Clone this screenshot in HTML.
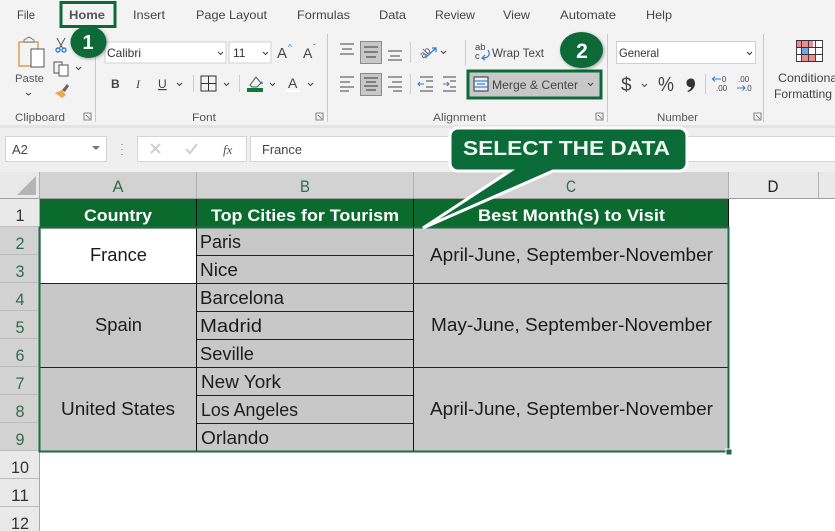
<!DOCTYPE html>
<html><head><meta charset="utf-8"><style>
html,body{margin:0;padding:0;background:#fff}
svg{display:block}
text{font-family:"Liberation Sans",sans-serif}
</style></head><body>
<svg width="835" height="531" viewBox="0 0 835 531" xmlns="http://www.w3.org/2000/svg">
<defs><style>
.tab{font-size:12px;fill:#444}
.lbl{font-size:11px;fill:#555}
.hd{font-size:17px;fill:#fff;font-weight:bold}
.cell{font-size:18px;fill:#1c1c1c}
.rn{font-size:17px;fill:#333;text-anchor:middle}
.rs{font-size:17px;fill:#2f6b50;text-anchor:middle}
.ln{stroke:#444;stroke-width:1;fill:none}
.sep{stroke:#cfcfcf;stroke-width:1}
</style>
<filter id="sh" x="-30%" y="-30%" width="160%" height="160%"><feDropShadow dx="1" dy="1" stdDeviation="1.500" flood-color="#000" flood-opacity=".35"/></filter>
</defs>
<rect width="835" height="531" fill="#fff"/>
<!-- ribbon -->
<rect width="835" height="125" fill="#f3f3f3"/>
<rect y="125" width="835" height="3" fill="#e4e4e4"/>
<rect y="128" width="835" height="44" fill="#efefef"/>
<!-- tabs -->
<text class="tab" x="17" y="19" textLength="18" lengthAdjust="spacingAndGlyphs">File</text>
<text class="tab" x="69" y="19" textLength="36" lengthAdjust="spacingAndGlyphs" style="font-weight:bold;fill:#555">Home</text>
<text class="tab" x="133" y="19" textLength="32" lengthAdjust="spacingAndGlyphs">Insert</text>
<text class="tab" x="196" y="19" textLength="71" lengthAdjust="spacingAndGlyphs">Page Layout</text>
<text class="tab" x="297" y="19" textLength="53" lengthAdjust="spacingAndGlyphs">Formulas</text>
<text class="tab" x="379" y="19" textLength="27" lengthAdjust="spacingAndGlyphs">Data</text>
<text class="tab" x="435" y="19" textLength="40" lengthAdjust="spacingAndGlyphs">Review</text>
<text class="tab" x="503" y="19" textLength="27" lengthAdjust="spacingAndGlyphs">View</text>
<text class="tab" x="560" y="19" textLength="56" lengthAdjust="spacingAndGlyphs">Automate</text>
<text class="tab" x="646" y="19" textLength="26" lengthAdjust="spacingAndGlyphs">Help</text>
<rect x="61" y="2.500" width="54" height="24" fill="none" stroke="#0b6b38" stroke-width="3"/>
<!-- clipboard -->
<rect x="19" y="42" width="19" height="24" fill="none" stroke="#d9a24f" stroke-width="1.500"/>
<path d="M24 42v-2l5-3 5 3v2z" fill="#f3f3f3" stroke="#777"/>
<rect x="31" y="49" width="13" height="18" fill="#fff" stroke="#555"/>
<text class="lbl" x="15" y="82" textLength="29" lengthAdjust="spacingAndGlyphs">Paste</text>
<path d="M26 93l2.500 2 2.500-2" class="ln"/>
<path d="M57 38l6 11M65 38l-6 11" stroke="#555" fill="none"/>
<circle cx="58" cy="50" r="2" fill="none" stroke="#2b7cd3" stroke-width="1.400"/><circle cx="64" cy="50" r="2" fill="none" stroke="#2b7cd3" stroke-width="1.400"/>
<rect x="54" y="62" width="8" height="11" fill="#f3f3f3" stroke="#555"/><rect x="59" y="65" width="9" height="11" fill="#fff" stroke="#555"/>
<path d="M76 67l2.500 2.500 2.500-2.500" class="ln"/>
<path d="M55 93l7-3 4 5-4 3z" fill="#e9a94c"/><path d="M62 90l5-6 2 2-4 6z" fill="#666"/>
<text class="lbl" x="15" y="121" textLength="50" lengthAdjust="spacingAndGlyphs">Clipboard</text>
<path d="M84 113h7v7h-7zM86 115l4 4" fill="none" stroke="#666" stroke-width=".8"/>
<line x1="95.500" y1="34" x2="95.500" y2="122" stroke="#c8c8c8"/>
<!-- font -->
<rect x="105" y="42" width="121" height="21" fill="#fff" stroke="#d0d0d0"/>
<text x="107" y="57" style="font-size:12px;fill:#333" textLength="34" lengthAdjust="spacingAndGlyphs">Calibri</text>
<path d="M218 52l2.500 2.500 2.500-2.500" class="ln"/>
<rect x="229" y="42" width="42" height="21" fill="#fff" stroke="#d0d0d0"/>
<text x="233" y="57" style="font-size:12px;fill:#333">11</text>
<path d="M263 52l2.500 2.500 2.500-2.500" class="ln"/>
<text x="277" y="58" style="font-size:15px;fill:#444">A</text><text x="288" y="50" style="font-size:8px;fill:#1f7ad0">^</text>
<text x="303" y="58" style="font-size:14px;fill:#444">A</text><text x="313" y="50" style="font-size:8px;fill:#1f7ad0">ˇ</text>
<text x="111" y="88" style="font-size:12px;font-weight:bold;fill:#444">B</text>
<text x="136" y="88" style="font-size:12px;font-style:italic;fill:#444;font-family:'Liberation Serif',serif">I</text>
<text x="158" y="88" style="font-size:12px;fill:#444;text-decoration:underline">U</text>
<path d="M177 83l2.500 2.500 2.500-2.500" class="ln"/>
<line x1="193.500" y1="75" x2="193.500" y2="92" class="sep"/>
<path d="M201 76h15v15h-15zM208.500 76v15M201 83.500h15" fill="none" stroke="#333"/>
<path d="M224 83l2.500 2.500 2.500-2.500" class="ln"/>
<line x1="239.500" y1="75" x2="239.500" y2="92" class="sep"/>
<path d="M250 85l6-8 5 6-4 4h-5z" fill="#f3f3f3" stroke="#555"/><path d="M260 84l2-3 1 3z" fill="#1f7ad0"/>
<rect x="247" y="88" width="16" height="4" fill="#0b7a3b"/>
<path d="M270 83l2.500 2.500 2.500-2.500" class="ln"/>
<text x="288" y="88" style="font-size:14px;fill:#444">A</text><rect x="286" y="90" width="14" height="2" fill="#fff"/>
<path d="M308 83l2.500 2.500 2.500-2.500" class="ln"/>
<text class="lbl" x="192" y="121" textLength="24" lengthAdjust="spacingAndGlyphs">Font</text>
<path d="M316 113h7v7h-7zM318 115l4 4" fill="none" stroke="#666" stroke-width=".8"/>
<line x1="327.500" y1="34" x2="327.500" y2="122" stroke="#c8c8c8"/>
<!-- alignment -->
<path d="M340 44h14M342 49h10M340 54h14" class="ln"/>
<rect x="360.500" y="41.500" width="21" height="22" fill="#c8c8c8" stroke="#8a8a8a"/>
<path d="M364 47h14M364 52h14M366 57h10" stroke="#333" fill="none"/>
<path d="M388 51h14M390 56h10M388 60h14" class="ln"/>
<line x1="410.500" y1="42" x2="410.500" y2="63" class="sep"/>
<text x="418" y="56" style="font-size:10px;fill:#555" transform="rotate(-45 424 51)">ab</text>
<path d="M425 58l11-10m-4 0h4v4" stroke="#2b7cd3" fill="none" stroke-width="1.300"/>
<path d="M441 51l2.500 2.500 2.500-2.500" class="ln"/>
<line x1="465.500" y1="40" x2="465.500" y2="66" class="sep"/>
<text x="475" y="50" style="font-size:9.500px;fill:#444">ab</text><text x="475" y="59" style="font-size:9.500px;fill:#444">c</text>
<path d="M488 50c3 5 0 8-5 8m2-3l-3 3 3 2" stroke="#2b7cd3" fill="none" stroke-width="1.200"/>
<text x="492" y="57" style="font-size:12px;fill:#444" textLength="52" lengthAdjust="spacingAndGlyphs">Wrap Text</text>
<path d="M340 77h14M340 82h10M340 87h14M340 91h9" class="ln" stroke-width=".9"/>
<rect x="360.500" y="73.500" width="21" height="22" fill="#c8c8c8" stroke="#8a8a8a"/>
<path d="M364 78h14M366 82h10M364 86h14M366 90h10" stroke="#333" fill="none"/>
<path d="M388 77h14M392 82h10M388 87h14M393 91h9" class="ln"/>
<line x1="410.500" y1="74" x2="410.500" y2="94" class="sep"/>
<path d="M424 84h-6m2-2l-2 2 2 2" stroke="#2b7cd3" fill="none"/><path d="M420 77h13M426 81h7M426 87h7M420 91h13" class="ln"/>
<path d="M443 84h6m-2-2l2 2-2 2" stroke="#2b7cd3" fill="none"/><path d="M443 77h13M450 81h6M450 87h6M443 91h13" class="ln"/>
<!-- merge -->
<rect x="468" y="71" width="133" height="27" fill="#c8c8c8" stroke="#0b6b38" stroke-width="3"/>
<rect x="474" y="77" width="14" height="14" fill="#e8eef5" stroke="#333"/><path d="M474 81h14M474 87h14M477 84h8" stroke="#1f6fc0" fill="none"/>
<text x="492" y="89" style="font-size:12px;fill:#444" textLength="86" lengthAdjust="spacingAndGlyphs">Merge &amp; Center</text>
<path d="M588 83l2.500 2.500 2.500-2.500" class="ln"/>
<text class="lbl" x="433" y="121" textLength="53" lengthAdjust="spacingAndGlyphs">Alignment</text>
<line x1="607.500" y1="34" x2="607.500" y2="122" stroke="#c8c8c8"/>
<path d="M596 113h7v7h-7zM598 115l4 4" fill="none" stroke="#666" stroke-width=".8"/>
<!-- number -->
<rect x="616.500" y="41.500" width="139" height="22" fill="#fff" stroke="#d0d0d0"/>
<text x="619" y="57" style="font-size:12px;fill:#333" textLength="40" lengthAdjust="spacingAndGlyphs">General</text>
<path d="M747 52l2.500 2.500 2.500-2.500" stroke="#333" fill="none"/>
<text x="621" y="91" style="font-size:19px;fill:#444">$</text>
<path d="M642 84l2.500 2.500 2.500-2.500" class="ln"/>
<text x="658" y="91" style="font-size:20px;fill:#444" textLength="16" lengthAdjust="spacingAndGlyphs">%</text>
<path d="M691 78.500c3 0 4 2.500 4 5 0 4-3 7.500-7 8.500l-.5-1c2-1 3.500-2.500 3.800-4-3 .5-4.800-1.500-4.800-4.300 0-2.400 2-4.200 4.500-4.200z" fill="#333"/>
<line x1="705.500" y1="74" x2="705.500" y2="94" class="sep"/>
<text x="724" y="82" style="font-size:8px;fill:#444;text-anchor:middle">0</text><text x="716" y="91" style="font-size:8px;fill:#444">.00</text>
<path d="M713 79h8m-6-2.500l-2.500 2.500 2.500 2.500" stroke="#2b7cd3" fill="none"/>
<text x="738" y="82" style="font-size:8px;fill:#444">.00</text><text x="745" y="91" style="font-size:8px;fill:#444">.0</text>
<path d="M737 88h8m-2.500-2.500l2.500 2.500-2.500 2.500" stroke="#2b7cd3" fill="none"/>
<text class="lbl" x="657" y="121" textLength="41" lengthAdjust="spacingAndGlyphs">Number</text>
<path d="M754 113h7v7h-7zM756 115l4 4" fill="none" stroke="#666" stroke-width=".8"/>
<line x1="763.500" y1="34" x2="763.500" y2="122" stroke="#c8c8c8"/>
<!-- conditional -->
<rect x="796" y="41" width="26" height="20" fill="#fff"/>
<rect x="796" y="41" width="17" height="6" fill="#f08a8e"/><rect x="801" y="48" width="7" height="6" fill="#6aa9e8"/><rect x="801" y="55" width="14" height="6" fill="#f08a8e"/>
<path d="M796.500 40.500h26v21h-26zM796 47.500h27M796 54.500h27M801.500 41v20M808.500 41v20M815.500 41v20" fill="none" stroke="#333" stroke-width=".9"/>
<text x="778" y="82" style="font-size:12px;fill:#444" textLength="62" lengthAdjust="spacingAndGlyphs">Conditional</text>
<text x="774" y="98" style="font-size:12px;fill:#444" textLength="58" lengthAdjust="spacingAndGlyphs">Formatting</text>
<!-- formula bar -->
<rect x="5.500" y="136.500" width="101" height="25" fill="#fff" stroke="#d4d4d4"/>
<text x="12" y="154" style="font-size:13px;fill:#444">A2</text>
<path d="M92 146h8l-4 4z" fill="#777"/>
<path d="M122 144v1M122 149v1M122 154v1" stroke="#999" stroke-width="1.500"/>
<rect x="137.500" y="136.500" width="109" height="25" fill="#fff" stroke="#d4d4d4"/>
<path d="M151 144l9 9M160 144l-9 9" stroke="#cfcfcf" stroke-width="2"/>
<path d="M186 149l4 4 7-9" stroke="#cfcfcf" stroke-width="2" fill="none"/>
<text x="223" y="154" style="font-size:13px;font-style:italic;fill:#555;font-family:'Liberation Serif',serif">fx</text>
<rect x="250.500" y="136.500" width="590" height="25" fill="#fff" stroke="#d4d4d4"/>
<text x="262" y="154" style="font-size:13px;fill:#444" textLength="40" lengthAdjust="spacingAndGlyphs">France</text>
<!-- headers -->
<rect y="172" width="835" height="27" fill="#e9e9e9"/>
<rect y="162" width="835" height="10" fill="#efefef"/>
<rect x="39" y="172" width="689" height="27" fill="#d2d2d2"/>
<path d="M36 176v19H17z" fill="#b5b5b5"/>
<path d="M39.500 172v27M196.500 172v27M413.500 172v27M728.500 172v27M818.500 172v27" stroke="#b0b0b0"/>
<line x1="0" y1="198.500" x2="835" y2="198.500" stroke="#a0a0a0"/>
<text class="rs" x="118" y="192" textLength="11" lengthAdjust="spacingAndGlyphs">A</text>
<text class="rs" x="305" y="192" textLength="10" lengthAdjust="spacingAndGlyphs">B</text>
<text class="rs" x="571" y="192" textLength="10" lengthAdjust="spacingAndGlyphs">C</text>
<text x="773" y="192" style="font-size:17px;fill:#222;text-anchor:middle" textLength="11" lengthAdjust="spacingAndGlyphs">D</text>
<!-- row headers -->
<rect x="0" y="199" width="39" height="332" fill="#e9e9e9"/>
<rect x="0" y="227" width="39" height="224" fill="#d2d2d2"/>
<path d="M0 226.500h39M0 254.500h39M0 282.500h39M0 310.500h39M0 338.500h39M0 366.500h39M0 394.500h39M0 422.500h39M0 450.500h39M0 478.500h39M0 506.500h39" stroke="#bdbdbd"/>
<line x1="39.500" y1="199" x2="39.500" y2="531" stroke="#a8a8a8"/>
<text class="rn" x="20" y="221" textLength="9" lengthAdjust="spacingAndGlyphs">1</text>
<text class="rs" x="20" y="249" textLength="9" lengthAdjust="spacingAndGlyphs">2</text><text class="rs" x="20" y="277" textLength="9" lengthAdjust="spacingAndGlyphs">3</text><text class="rs" x="20" y="305" textLength="9" lengthAdjust="spacingAndGlyphs">4</text><text class="rs" x="20" y="333" textLength="9" lengthAdjust="spacingAndGlyphs">5</text><text class="rs" x="20" y="361" textLength="9" lengthAdjust="spacingAndGlyphs">6</text><text class="rs" x="20" y="389" textLength="9" lengthAdjust="spacingAndGlyphs">7</text><text class="rs" x="20" y="417" textLength="9" lengthAdjust="spacingAndGlyphs">8</text><text class="rs" x="20" y="445" textLength="9" lengthAdjust="spacingAndGlyphs">9</text>
<text class="rn" x="20" y="473" textLength="18" lengthAdjust="spacingAndGlyphs">10</text><text class="rn" x="20" y="501" textLength="18" lengthAdjust="spacingAndGlyphs">11</text><text class="rn" x="20" y="529" textLength="18" lengthAdjust="spacingAndGlyphs">12</text>
<!-- table -->
<rect x="40" y="199" width="688" height="28" fill="#0b6b2e"/>
<rect x="40" y="227" width="688" height="224" fill="#c8c8c8"/>
<rect x="41" y="229" width="155" height="54" fill="#fff"/>
<path d="M196.500 199v252M413.500 199v252M728.500 199v28" stroke="#111"/>
<path d="M197 255.500h216M197 311.500h216M197 339.500h216M197 395.500h216M197 423.500h216M40 283.500h156M413 283.500h315M40 367.500h156M197 283.500h216M197 367.500h216M413 367.500h315" stroke="#222"/>
<text class="hd" x="84" y="221" textLength="68" lengthAdjust="spacingAndGlyphs">Country</text>
<text class="hd" x="211" y="221" textLength="188" lengthAdjust="spacingAndGlyphs">Top Cities for Tourism</text>
<text class="hd" x="478" y="221" textLength="187" lengthAdjust="spacingAndGlyphs">Best Month(s) to Visit</text>
<text class="cell" x="90" y="261" textLength="57" lengthAdjust="spacingAndGlyphs">France</text>
<text class="cell" x="95" y="331" textLength="47" lengthAdjust="spacingAndGlyphs">Spain</text>
<text class="cell" x="61" y="415" textLength="114" lengthAdjust="spacingAndGlyphs">United States</text>
<text class="cell" x="200" y="248" textLength="41" lengthAdjust="spacingAndGlyphs">Paris</text>
<text class="cell" x="200" y="276" textLength="38" lengthAdjust="spacingAndGlyphs">Nice</text>
<text class="cell" x="200" y="304" textLength="84" lengthAdjust="spacingAndGlyphs">Barcelona</text>
<text class="cell" x="200" y="332" textLength="62" lengthAdjust="spacingAndGlyphs">Madrid</text>
<text class="cell" x="200" y="360" textLength="54" lengthAdjust="spacingAndGlyphs">Seville</text>
<text class="cell" x="201" y="388" textLength="80" lengthAdjust="spacingAndGlyphs">New York</text>
<text class="cell" x="201" y="416" textLength="97" lengthAdjust="spacingAndGlyphs">Los Angeles</text>
<text class="cell" x="201" y="444" textLength="68" lengthAdjust="spacingAndGlyphs">Orlando</text>
<text class="cell" x="430" y="261" textLength="283" lengthAdjust="spacingAndGlyphs">April-June, September-November</text>
<text class="cell" x="431" y="331" textLength="281" lengthAdjust="spacingAndGlyphs">May-June, September-November</text>
<text class="cell" x="430" y="415" textLength="283" lengthAdjust="spacingAndGlyphs">April-June, September-November</text>
<!-- selection -->
<rect x="39.500" y="227.500" width="689" height="224" fill="none" stroke="#1f6b45" stroke-width="2"/>
<rect x="726" y="449" width="6" height="6" fill="#1f6b45" stroke="#fff"/>
<!-- callouts -->
<path d="M458 128h221a8 8 0 0 1 8 8v27a8 8 0 0 1-8 8H553L423 228 510 171h-52a8 8 0 0 1-8-8v-27a8 8 0 0 1 8-8z" fill="#0b6b38" stroke="#fff" stroke-width="3"/>
<text x="463" y="155" style="font-size:20px;font-weight:bold;fill:#eef6f0" textLength="207" lengthAdjust="spacingAndGlyphs">SELECT THE DATA</text>
<ellipse cx="88.500" cy="42" rx="18" ry="16" fill="#0b6b38" filter="url(#sh)"/>
<text x="88" y="49" style="font-size:20px;font-weight:bold;fill:#fff;text-anchor:middle">1</text>
<ellipse cx="581.500" cy="50" rx="21.500" ry="18" fill="#0b6b38" filter="url(#sh)"/>
<text x="582" y="58" style="font-size:21px;font-weight:bold;fill:#fff;text-anchor:middle">2</text>
</svg>
</body></html>
